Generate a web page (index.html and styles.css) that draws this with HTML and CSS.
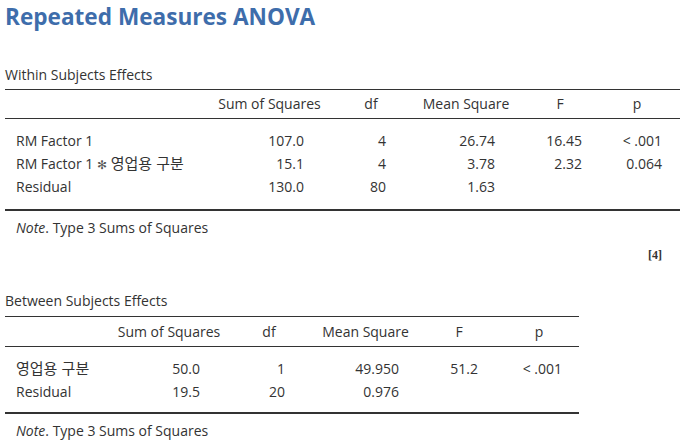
FILE: index.html
```html
<!DOCTYPE html>
<html lang="ko">
<head>
<meta charset="utf-8">
<title>Repeated Measures ANOVA</title>
<link rel="stylesheet" href="styles.css">
</head>
<body>
<div class="page">
  <h1 class="title">Repeated Measures ANOVA</h1>

  <div class="caption caption-within">Within Subjects Effects</div>
  <table class="anova anova-within">
    <colgroup>
      <col class="w-label"><col class="w-ss"><col class="w-df"><col class="w-ms"><col class="w-f"><col class="w-p">
    </colgroup>
    <thead>
      <tr><th></th><th>Sum of Squares</th><th>df</th><th>Mean Square</th><th>F</th><th class="h-p">p</th></tr>
    </thead>
    <tbody>
      <tr class="first"><td class="label">RM Factor 1</td><td class="num ss">107.0</td><td class="num df">4</td><td class="num ms">26.74</td><td class="num f">16.45</td><td class="num p">&lt; .001</td></tr>
      <tr><td class="label">RM Factor 1 <span class="star">✻</span> <span class="ko">영업용 구분</span></td><td class="num ss">15.1</td><td class="num df">4</td><td class="num ms">3.78</td><td class="num f">2.32</td><td class="num p">0.064</td></tr>
      <tr class="last"><td class="label">Residual</td><td class="num ss">130.0</td><td class="num df">80</td><td class="num ms">1.63</td><td class="num f"></td><td class="num p"></td></tr>
    </tbody>
  </table>
  <div class="note"><em>Note</em>. Type 3 Sums of Squares</div>

  <div class="ref">[4]</div>

  <div class="caption caption-between">Between Subjects Effects</div>
  <table class="anova anova-between">
    <colgroup>
      <col class="b-label"><col class="b-ss"><col class="b-df"><col class="b-ms"><col class="b-f"><col class="b-p">
    </colgroup>
    <thead>
      <tr><th></th><th>Sum of Squares</th><th>df</th><th>Mean Square</th><th>F</th><th class="h-p">p</th></tr>
    </thead>
    <tbody>
      <tr class="first"><td class="label"><span class="ko">영업용 구분</span></td><td class="num ss">50.0</td><td class="num df">1</td><td class="num ms">49.950</td><td class="num f">51.2</td><td class="num p">&lt; .001</td></tr>
      <tr class="last"><td class="label">Residual</td><td class="num ss">19.5</td><td class="num df">20</td><td class="num ms">0.976</td><td class="num f"></td><td class="num p"></td></tr>
    </tbody>
  </table>
  <div class="note"><em>Note</em>. Type 3 Sums of Squares</div>
</div>
</body>
</html>
```

FILE: styles.css
```css
* { box-sizing: border-box; }

html, body {
  margin: 0;
  padding: 0;
  background: #ffffff;
}

body {
  font-family: "Open Sans", "Noto Sans CJK KR", sans-serif;
  font-size: 14px;
  color: #333333;
}

.page {
  padding-left: 5px;
  width: 686px;
}

.title {
  margin: 0;
  height: 65px;
  padding-top: 2px;
  font-size: 22.6px;
  line-height: 30px;
  font-weight: 700;
  color: #3e6dab;
}

.caption {
  line-height: 20px;
  padding-bottom: 4px;
}

.caption-between {
  margin-top: 29px;
  padding-bottom: 5px;
}

.anova {
  border-collapse: separate;
  border-spacing: 0;
  table-layout: fixed;
}

.anova-within { width: 675px; }
.anova-between { width: 574px; }

.w-label { width: 205px; }
.w-ss { width: 119px; }
.w-df { width: 84px; }
.w-ms { width: 106px; }
.w-f { width: 82px; }
.w-p { width: 79px; }

.b-label { width: 93px; }
.b-ss { width: 142px; }
.b-df { width: 58px; }
.b-ms { width: 135px; }
.b-f { width: 52px; }
.b-p { width: 94px; }

.anova th {
  font-weight: 400;
  text-align: center;
  padding: 0;
  line-height: 28px;
  border-top: 1px solid #333333;
  border-bottom: 1px solid #333333;
  white-space: nowrap;
}

.anova-between th { line-height: 29px; }

.anova td {
  padding: 0;
  height: 23px;
  line-height: 23px;
  white-space: nowrap;
}

.anova tr.first td { padding-top: 10px; height: 33px; }
.anova-within tr.last td { padding-bottom: 11px; height: 34px; }
.anova-between tr.last td { padding-bottom: 9px; height: 32px; }
.anova tr.last td { border-bottom: 2px solid #333333; }

.anova td.label { padding-left: 11px; text-align: left; }
.anova td.num { text-align: right; }

.anova-within .h-p { padding-right: 7px; }
.anova-within td.ss { padding-right: 25px; }
.anova-within td.df { padding-right: 27px; }
.anova-within td.ms { padding-right: 24px; }
.anova-within td.f { padding-right: 19px; }
.anova-within td.p { padding-right: 18px; }

.anova-between .h-p { padding-left: 14px; }
.anova-between td.ss { padding-right: 40px; }
.anova-between td.df { padding-right: 13px; }
.anova-between td.ms { padding-right: 34px; }
.anova-between td.f { padding-right: 7px; }
.anova-between td.p { padding-right: 17px; }

.star {
  font-family: "DejaVu Sans", sans-serif;
  font-size: 12px;
  line-height: 1;
  color: #555555;
}

.ko {
  font-family: "Noto Sans CJK KR", sans-serif;
  font-size: 15px;
  line-height: 1;
  font-weight: 400;
}

.note {
  padding-left: 11px;
  padding-top: 7px;
  line-height: 20px;
}

.ref {
  margin-top: 10px;
  line-height: 14px;
  text-align: right;
  padding-right: 24px;
  font-family: "Liberation Serif", serif;
  font-weight: 700;
  font-size: 12px;
}
```
